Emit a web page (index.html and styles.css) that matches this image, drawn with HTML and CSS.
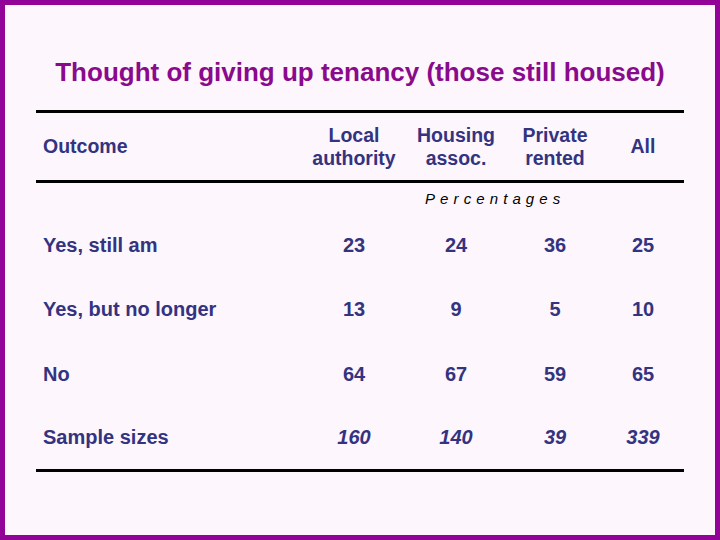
FILE: index.html
```html
<!DOCTYPE html>
<html>
<head>
<meta charset="utf-8">
<link rel="stylesheet" href="styles.css">
</head>
<body>
<div class="frame">
  <h1 class="title">Thought of giving up tenancy (those still housed)</h1>
  <div class="table">
    <div class="rule"></div>
    <div class="row head">
      <div class="label">Outcome</div>
      <div class="cell">Local<br>authority</div>
      <div class="cell">Housing<br>assoc.</div>
      <div class="cell">Private<br>rented</div>
      <div class="cell">All</div>
    </div>
    <div class="rule"></div>
    <div class="pct-row">
      <div class="pct">Percentages</div>
    </div>
    <div class="row data">
      <div class="label">Yes, still am</div>
      <div class="cell">23</div>
      <div class="cell">24</div>
      <div class="cell">36</div>
      <div class="cell">25</div>
    </div>
    <div class="row data">
      <div class="label">Yes, but no longer</div>
      <div class="cell">13</div>
      <div class="cell">9</div>
      <div class="cell">5</div>
      <div class="cell">10</div>
    </div>
    <div class="row data">
      <div class="label">No</div>
      <div class="cell">64</div>
      <div class="cell">67</div>
      <div class="cell">59</div>
      <div class="cell">65</div>
    </div>
    <div class="row data sample">
      <div class="label">Sample sizes</div>
      <div class="cell">160</div>
      <div class="cell">140</div>
      <div class="cell">39</div>
      <div class="cell">339</div>
    </div>
    <div class="rule"></div>
  </div>
</div>
</body>
</html>
```

FILE: styles.css
```css
html, body {
  margin: 0;
  padding: 0;
}
body {
  width: 720px;
  height: 540px;
  overflow: hidden;
  font-family: "Liberation Sans", Arial, sans-serif;
}
.frame {
  box-sizing: border-box;
  width: 720px;
  height: 540px;
  border: 5px solid #920397;
  background: #fdf6fd;
  padding: 52px 31px 0 31px;
}
.title {
  margin: 0;
  font-size: 26px;
  line-height: 30px;
  font-weight: bold;
  color: #8a0a8c;
  text-align: center;
  margin-left: -31px;
  margin-right: -31px;
}
.table {
  margin-top: 23px;
  color: #333380;
}
.rule {
  height: 3px;
  background: #000;
}
.row {
  display: grid;
  grid-template-columns: 268px 100px 104px 94px 82px;
  align-items: center;
  font-size: 20px;
  font-weight: bold;
}
.label {
  padding-left: 7px;
}
.cell {
  text-align: center;
}
.head {
  height: 67px;
  font-size: 19.5px;
  line-height: 23px;
}
.pct-row {
  height: 30px;
  display: flex;
  align-items: center;
  padding-left: 389px;
}
.pct {
  font-size: 15px;
  font-style: italic;
  letter-spacing: 5.1px;
  color: #000;
}
.data {
  height: 64.5px;
}
.data.sample {
  height: 62.5px;
}
.sample .cell {
  font-style: italic;
}
```
